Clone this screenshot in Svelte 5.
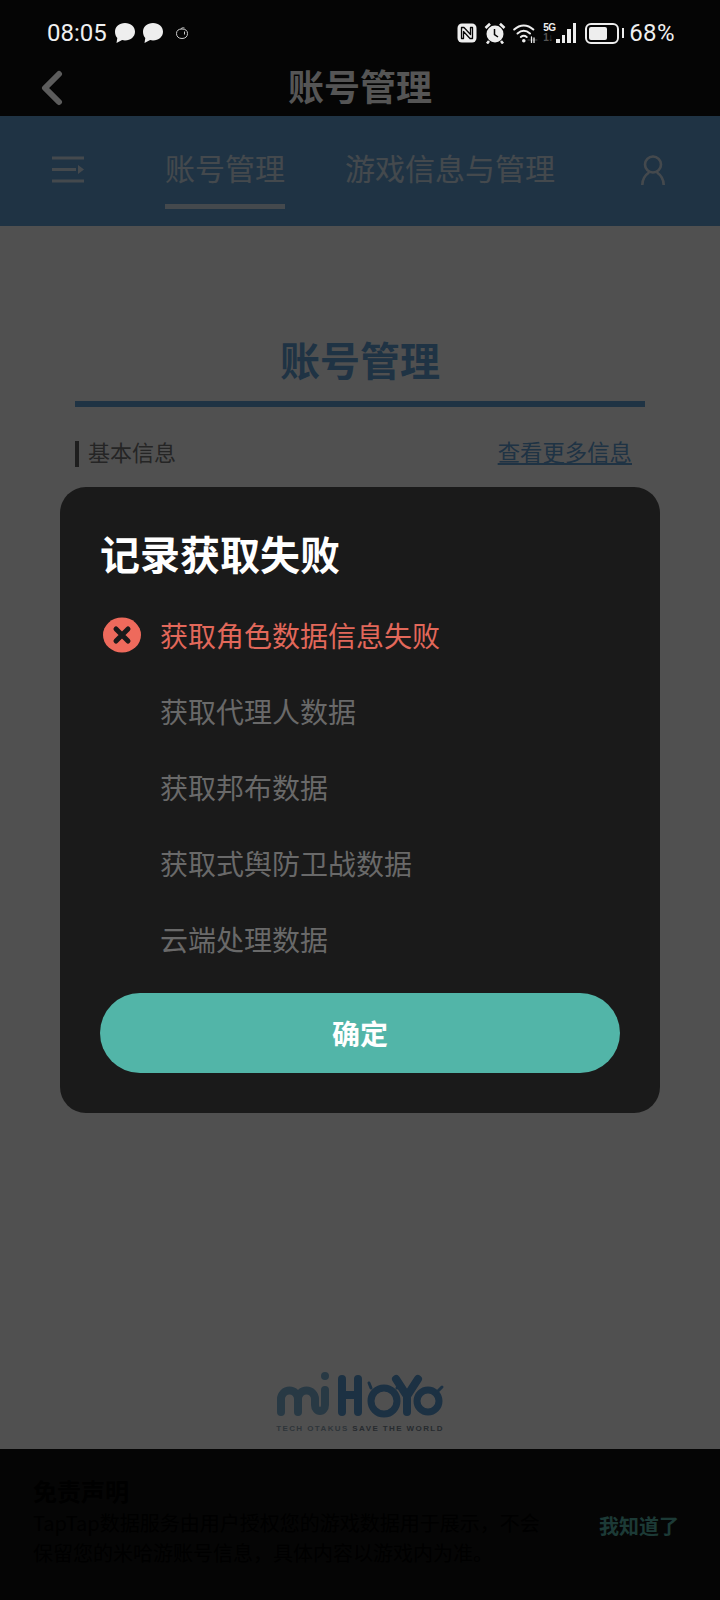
<script lang="ts">
  const steps = ['获取代理人数据', '获取邦布数据', '获取式舆防卫战数据', '云端处理数据'];
</script>

<div class="screen">
  <div class="top">
    <div class="status">
      <div class="status-left">
        <span class="time">08:05</span>
        <svg class="bubble" viewBox="0 0 22 22"><path d="M11 1c5.800 0 10 3.900 10 8.700s-4.200 8.700-10 8.700c-1 0-2-.1-2.900-.4L2.500 21l.8-5.100C1.800 14.400 1 12.200 1 9.700 1 4.900 5.200 1 11 1z" fill="#eee"/></svg>
        <svg class="bubble" viewBox="0 0 22 22"><path d="M11 1c5.800 0 10 3.900 10 8.700s-4.200 8.700-10 8.700c-1 0-2-.1-2.900-.4L2.500 21l.8-5.100C1.800 14.400 1 12.200 1 9.700 1 4.900 5.200 1 11 1z" fill="#eee"/></svg>
        <svg class="tiny" viewBox="0 0 14 14" fill="none" stroke="#ccc" stroke-width="1"><path d="M1.500 7.500C1.500 4.500 3.500 3 7 3c3.500 0 5.500 1.500 5.500 4.500S10.500 12.500 7 12.500 1.500 10.500 1.500 7.500z"/><path d="M6 3c0-1 2-1.500 3.500-1"/><path d="M9.500 5.500v3"/></svg>
      </div>
      <div class="status-right">
        <svg class="nfc" viewBox="0 0 20 20"><rect x="0.500" y="0.500" width="19" height="19" rx="4.500" fill="#eee"/><path d="M4.500 4.500h2.500l6.500 7V4.500h2v11h-2.500L6.500 8.500v7h-2z" fill="#eee" stroke="#050505" stroke-width="1.300" stroke-linejoin="round"/></svg>
        <svg class="alarm" viewBox="0 0 22 22"><circle cx="11" cy="12" r="8.500" fill="#eee"/><path d="M10.500 7v5.500l3.500 2.500" fill="none" stroke="#050505" stroke-width="1.500"/><path d="M1.500 6 6 1.800M20.500 6 16 1.800M5 19l-2 2.500M17 19l2 2.500" stroke="#eee" stroke-width="2.600"/></svg>
        <svg class="wifi" viewBox="0 0 25 20" fill="none" stroke="#eee" stroke-width="2" stroke-linecap="round"><path d="M1.200 6.500C7 1 14.500 1 20.300 6.500"/><path d="M4.500 10.500c4-3.500 8.500-3.500 12.500 0"/><path d="M7.800 14c2-1.600 4-1.600 5.900 0"/><circle cx="10.800" cy="17.800" r="1.800" fill="#eee" stroke="none"/><path d="M15 17h9" stroke-width="0.800" stroke="#555"/><path d="M18.500 14v5.500M21 15v5" stroke-width="1.300"/></svg>
        <div class="signal">
          <div class="net"><span class="g5">5G</span><span class="g4">1↓</span></div>
          <div class="bars"><i style="height: 4px"></i><i style="height: 8px"></i><i style="height: 14px"></i><i style="height: 20px"></i></div>
        </div>
        <div class="battery"><div class="shell"><div class="level" style="width: 68%"></div></div><div class="nub"></div></div>
        <span class="pct">68%</span>
      </div>
    </div>
    <div class="titlebar">
      <svg class="back" viewBox="0 0 22 36" fill="none" stroke="#5c5c5c" stroke-width="6" stroke-linecap="round" stroke-linejoin="round"><path d="M18 4 4 18l14 14"/></svg>
      <span class="bar-title">账号管理</span>
    </div>
  </div>

  <div class="page">
    <div class="tabs">
      <svg class="menu" viewBox="0 0 32 27" fill="none" stroke="#fff" stroke-opacity="0.76" stroke-width="3"><path d="M0 2h32M0 13.500h24M0 25h32"/><path d="M26 9l6 4.500-6 4.500z" fill="#fff" fill-opacity="0.76" stroke="none"/></svg>
      <div class="tab active">账号管理</div>
      <div class="tab second">游戏信息与管理</div>
      <svg class="user" viewBox="0 0 24 30" fill="none" stroke="#fff" stroke-opacity="0.76" stroke-width="2.600"><circle cx="12" cy="9.500" r="8"/><path d="M1.300 30c0-6 3-10 6.700-12.500M22.700 30c0-6-3-10-6.700-12.500"/></svg>
    </div>

    <div class="content">
      <h1>账号管理</h1>
      <div class="rule"></div>
      <div class="section">
        <div class="section-name"><i class="mark"></i><span>基本信息</span></div>
        <span class="more">查看更多信息</span>
      </div>
    </div>

    <div class="brand">
      <svg class="logo" viewBox="270 1365 180 55" fill="none" stroke-linecap="round" stroke-linejoin="round">
        <g stroke="#7fb5d8" stroke-width="8">
          <path d="M281 1410v-13a8.500 8.500 0 0 1 17 0v13"/>
          <path d="M298 1397a8.500 8.500 0 0 1 17 0v6a5 6 0 0 0 10 0v-15"/>
          <circle cx="325" cy="1374" r="1.500" fill="#7fb5d8" stroke-width="5"/>
        </g>
        <g stroke="#5a9bd4" stroke-width="8">
          <path d="M342 1377v33M358 1377v33M342 1393h16"/>
          <circle cx="384" cy="1399" r="13" stroke-width="7"/>
          <path d="M369 1381l2 5M399 1381l-2 5" stroke-width="3"/>
          <path d="M396 1377l11 17 11-17M407 1394v16"/>
          <circle cx="428" cy="1399" r="11" stroke-width="7"/>
          <path d="M436 1391l6-6" stroke-width="3"/>
        </g>
      </svg>
      <div class="slogan"><span class="dim">TECH OTAKUS</span> SAVE THE WORLD</div>
    </div>

    <div class="notice">
      <div class="notice-text">
        <div class="notice-title">免责声明</div>
        <p>TapTap数据服务由用户授权您的游戏数据用于展示，不会保留您的米哈游账号信息，具体内容以游戏内为准。</p>
      </div>
      <span class="ok">我知道了</span>
    </div>
  </div>

  <div class="overlay">
    <div class="dialog">
      <h2>记录获取失败</h2>
      <div class="steps">
        <div class="step failed">
          <svg class="err" viewBox="0 0 38 36"><ellipse cx="19" cy="18" rx="19" ry="17.500" fill="#ee6a5c"/><path d="M13 12l12 12M25 12 13 24" stroke="#1a1a1a" stroke-width="5" stroke-linecap="round"/></svg>
          <span>获取角色数据信息失败</span>
        </div>
        {#each steps as step}
          <div class="step"><span>{step}</span></div>
        {/each}
      </div>
      <button class="confirm">确定</button>
    </div>
  </div>
</div>

<style>
  :global(body) {
    margin: 0;
    background: #505050;
  }

  .screen {
    position: relative;
    width: 720px;
    height: 1600px;
    overflow: hidden;
    display: flex;
    flex-direction: column;
    font-family: "Noto Sans CJK SC", "Noto Sans", sans-serif;
  }

  .top {
    height: 116px;
    flex-shrink: 0;
    background: #050505;
    position: relative;
    z-index: 2;
  }

  .status {
    height: 66px;
    padding: 0 45px 0 47px;
    display: flex;
    justify-content: space-between;
    align-items: center;
    color: #eee;
  }

  .status-left, .status-right {
    display: flex;
    align-items: center;
  }

  .time, .pct {
    font-family: Roboto, sans-serif;
    font-size: 24px;
    color: #f0f0f0;
  }

  .pct {
    letter-spacing: 0.4px;
    margin-left: 5px;
  }

  .bubble {
    width: 22px;
    height: 22px;
    margin-left: 6px;
  }

  .time + .bubble {
    margin-left: 7px;
  }

  .tiny {
    width: 14px;
    height: 14px;
    margin-left: 11px;
  }

  .nfc {
    width: 20px;
    height: 20px;
  }

  .alarm {
    width: 22px;
    height: 22px;
    margin-left: 7px;
  }

  .wifi {
    width: 25px;
    height: 20px;
    margin-left: 7px;
  }

  .signal {
    display: flex;
    align-items: flex-end;
    margin-left: 5px;
  }

  .net {
    width: 12px;
    display: flex;
    flex-direction: column;
    font-family: "Liberation Sans", sans-serif;
    font-weight: 700;
    font-size: 10px;
    line-height: 10px;
    letter-spacing: -0.5px;
  }

  .g4 {
    color: #555;
  }

  .bars {
    display: flex;
    align-items: flex-end;
    gap: 2px;
    margin-left: 1px;
  }

  .bars i {
    width: 3.500px;
    background: #eee;
  }

  .battery {
    display: flex;
    align-items: center;
    margin-left: 9px;
  }

  .shell {
    width: 34px;
    height: 21px;
    padding: 2px;
    box-sizing: border-box;
    border: 2px solid #eee;
    border-radius: 6px;
  }

  .level {
    height: 100%;
    background: #eee;
    border-radius: 2px;
  }

  .nub {
    width: 2px;
    height: 10px;
    margin-left: 3px;
    background: #eee;
  }

  .titlebar {
    height: 50px;
    padding-bottom: 12px;
    box-sizing: border-box;
    position: relative;
    display: flex;
    justify-content: center;
    align-items: center;
  }

  .back {
    position: absolute;
    left: 41px;
    top: 4px;
    width: 22px;
    height: 36px;
  }

  .bar-title {
    font-size: 36px;
    font-weight: 700;
    color: #555;
    line-height: 38px;
  }

  .page {
    flex: 1;
    display: flex;
    flex-direction: column;
    background: #fff;
  }

  .tabs {
    height: 110px;
    flex-shrink: 0;
    background: #63a2d8;
    display: flex;
    align-items: flex-start;
    padding-left: 52px;
    box-sizing: border-box;
  }

  .menu {
    width: 32px;
    height: 27px;
    margin-top: 40px;
    flex-shrink: 0;
  }

  .tab {
    font-size: 30px;
    color: #fff;
    opacity: 0.76;
    line-height: 42px;
    padding-top: 30px;
    white-space: nowrap;
  }

  .active {
    margin-left: 81px;
    width: 120px;
    padding-bottom: 16px;
    border-bottom: 5px solid #fff;
    text-align: center;
  }

  .second {
    margin-left: 60px;
  }

  .user {
    width: 24px;
    height: 30px;
    margin: 39px 0 0 86px;
    flex-shrink: 0;
  }

  .content {
    padding: 105px 75px 0;
  }

  h1 {
    margin: 0;
    text-align: center;
    font-size: 40px;
    font-weight: 700;
    line-height: 56px;
    color: #63a2d8;
  }

  .rule {
    height: 6px;
    margin-top: 14px;
    background: #63a2d8;
  }

  .section {
    margin-top: 27px;
    display: flex;
    justify-content: space-between;
    align-items: center;
    padding-right: 13px;
  }

  .section-name {
    display: flex;
    align-items: center;
    gap: 9px;
    font-size: 22px;
    line-height: 26px;
    color: #767676;
  }

  .mark {
    width: 4px;
    height: 26px;
    margin-top: 6px;
    background: #606060;
  }

  .more {
    font-size: 22.400px;
    line-height: 34px;
    color: #63a2d8;
    text-decoration: underline;
  }

  .brand {
    margin-top: auto;
    display: flex;
    flex-direction: column;
    align-items: center;
    padding-bottom: 15px;
  }

  .logo {
    width: 180px;
    height: 55px;
  }

  .slogan {
    margin-top: 2px;
    font-family: "Liberation Sans", sans-serif;
    font-size: 8px;
    font-weight: 700;
    letter-spacing: 1.400px;
    line-height: 10px;
    color: #7d8a96;
  }

  .dim {
    color: #96aab8;
  }

  .notice {
    height: 151px;
    flex-shrink: 0;
    background: #111;
    display: flex;
    align-items: flex-start;
    justify-content: space-between;
    padding: 25px 41px 0 33px;
    box-sizing: border-box;
    color: #000;
  }

  .notice-text {
    width: 512px;
  }

  .notice-title {
    font-size: 24px;
    font-weight: 700;
    line-height: 34px;
  }

  .notice p {
    margin: 0;
    font-size: 20px;
    line-height: 30px;
  }

  .ok {
    margin-top: 37px;
    font-size: 20px;
    line-height: 30px;
    font-weight: 700;
    color: #5bb9ac;
  }

  .overlay {
    position: absolute;
    inset: 0;
    background: rgba(0, 0, 0, 0.686);
    display: flex;
    align-items: center;
    justify-content: center;
  }

  .dialog {
    width: 600px;
    box-sizing: border-box;
    padding: 38px 40px 40px;
    background: #1a1a1a;
    border-radius: 26px;
  }

  h2 {
    margin: 0;
    font-size: 40px;
    font-weight: 700;
    line-height: 56px;
    color: #fff;
  }

  .steps {
    margin-top: 16px;
    display: flex;
    flex-direction: column;
  }

  .step {
    height: 76px;
    display: flex;
    align-items: center;
    padding-left: 60px;
    position: relative;
    font-size: 28px;
    color: #696969;
  }

  .failed {
    color: #e2685a;
  }

  .err {
    position: absolute;
    left: 3px;
    top: 20px;
    width: 38px;
    height: 36px;
  }

  .confirm {
    display: block;
    width: 100%;
    height: 80px;
    margin-top: 16px;
    border: 0;
    border-radius: 40px;
    background: #52b5a8;
    color: #fff;
    font-family: inherit;
    font-size: 28px;
    font-weight: 700;
  }
</style>
